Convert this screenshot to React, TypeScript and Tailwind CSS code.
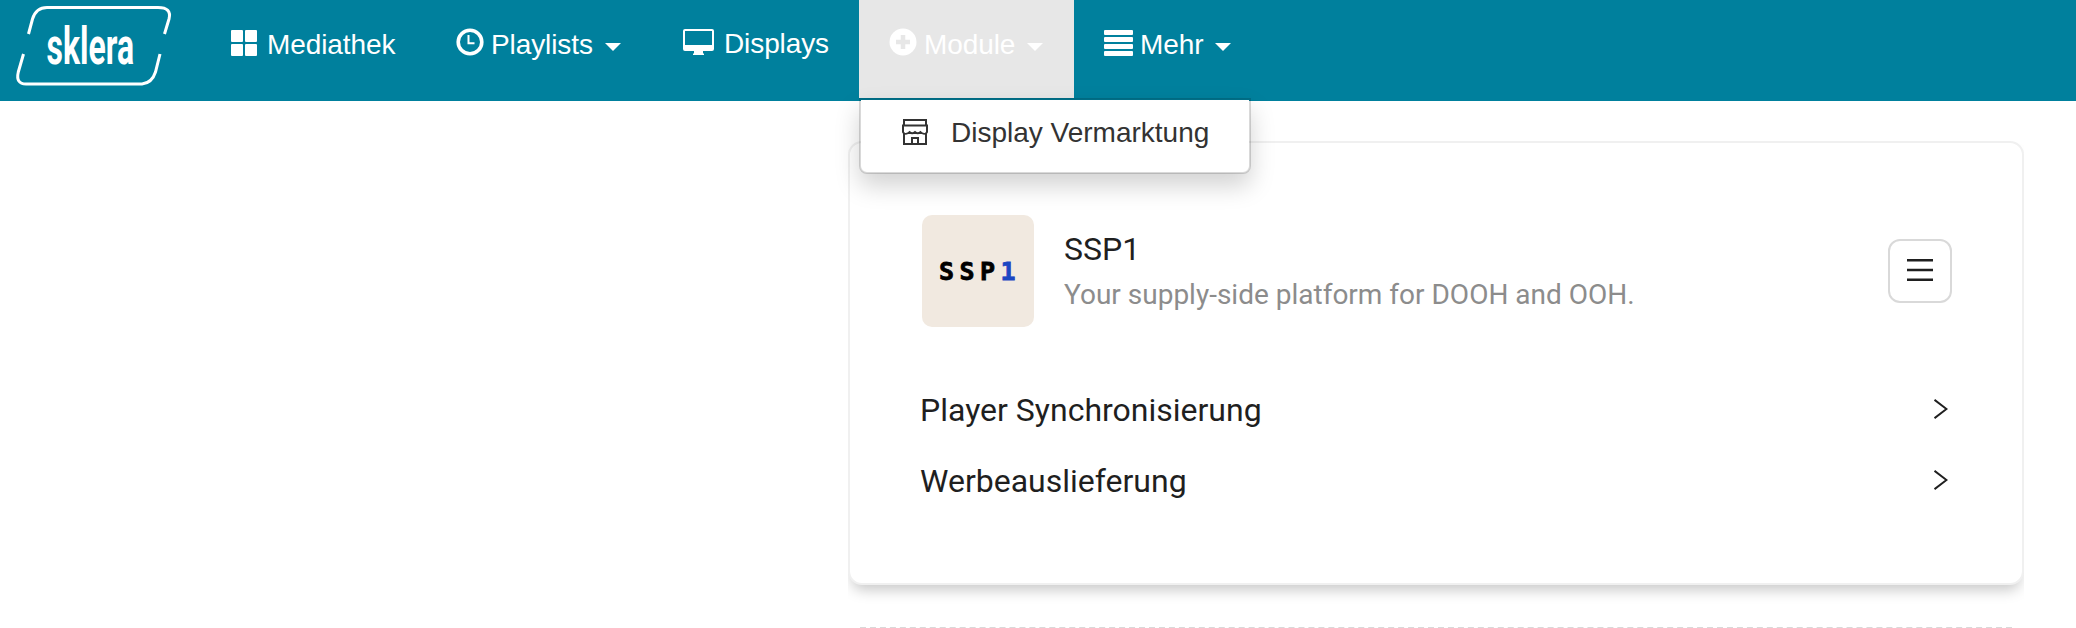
import type { ReactNode } from "react";

const navFont = "font-['Liberation_Sans',Arial,sans-serif] text-[28px] leading-[40px]";

function Caret() {
  return (
    <span className="ml-3 mt-1.5 h-0 w-0 border-x-8 border-t-8 border-x-transparent border-t-current" />
  );
}

function Logo() {
  return (
    <svg width="180" height="100" viewBox="0 0 180 100" role="img" aria-label="sklera">
      <g fill="none" stroke="#fff" strokeWidth="3">
        <path d="M28.5 34 L32.5 19 Q36 7.5 47 7.5 H158 Q172 7.5 169 19 L164.5 34" />
        <path d="M23.5 54 L18.3 72 Q15.5 84 26 84 H142 Q152 83 155.5 72 L160 54" />
      </g>
      <text
        transform="translate(46.5 64) scale(0.627 1)"
        fill="#fff"
        fontFamily="Roboto, sans-serif"
        fontWeight="700"
        fontSize="51"
      >
        sklera
      </text>
    </svg>
  );
}

function TilesIcon() {
  return (
    <svg width="26" height="26" viewBox="0 0 26 26" fill="currentColor" className="-mt-0.5 mr-2.5" aria-hidden="true">
      <rect width="12" height="12" rx="1" />
      <rect x="14" width="12" height="12" rx="1" />
      <rect y="14" width="12" height="12" rx="1" />
      <rect x="14" y="14" width="12" height="12" rx="1" />
    </svg>
  );
}

function ClockIcon() {
  return (
    <svg width="28" height="28" viewBox="0 0 28 28" fill="none" stroke="currentColor" className="-mt-1 mr-[7px]" aria-hidden="true">
      <circle cx="14" cy="14" r="11.8" strokeWidth="3.6" />
      <path d="M12.500 7v8.200h6" strokeWidth="2" />
    </svg>
  );
}

function ScreenIcon() {
  return (
    <svg width="31" height="27" viewBox="0 0 31 27" fill="currentColor" className="-mt-0.5 mr-2.5" aria-hidden="true">
      <path
        fillRule="evenodd"
        d="M2 0h27a2 2 0 0 1 2 2v18a2 2 0 0 1-2 2h-9v2l1 1v1H10v-1l1-1v-2H2a2 2 0 0 1-2-2V2a2 2 0 0 1 2-2zM2 2v14h27V2z"
      />
    </svg>
  );
}

function PlusIcon() {
  return (
    <svg width="28" height="28" viewBox="0 0 28 28" className="-mt-1 mr-[7px]" aria-hidden="true">
      <circle cx="14" cy="14" r="13.5" fill="currentColor" />
      <path d="M14 7v14M7 14h14" stroke="#e7e7e7" strokeWidth="4.5" />
    </svg>
  );
}

function RowsIcon() {
  return (
    <svg width="29" height="26" viewBox="0 0 29 26" fill="currentColor" className="-mt-0.5 mr-[7px]" aria-hidden="true">
      <rect width="29" height="5" rx="1" />
      <rect y="7" width="29" height="5" rx="1" />
      <rect y="14" width="29" height="5" rx="1" />
      <rect y="21" width="29" height="5" rx="1" />
    </svg>
  );
}

function ShopIcon() {
  return (
    <svg width="26" height="26" viewBox="0 0 26 26" fill="none" stroke="#333" strokeWidth="2" aria-hidden="true">
      <path d="M2 6.500V1h22v5.500M1 6.500h24V13l-1 1.500V25H2V14.500L1 13z" />
      <path d="M2 14.500q3.500 1 5.500-1.500q2.700 2.500 5.500 0q2.800 2.500 5.500 0q2 2.500 5.500 1.500" strokeWidth="1.8" />
      <path d="M10 25v-6h6v6" />
    </svg>
  );
}

type NavItemProps = { icon: ReactNode; label: string; className: string; caret?: boolean };

function NavItem({ icon, label, className, caret }: NavItemProps) {
  return (
    <a href="#" className={`flex h-[98px] items-start whitespace-nowrap text-white ${className}`}>
      <span className="flex h-10 items-center">
        {icon}
        <span className="mt-0.5 tracking-[-0.1px]">{label}</span>
        {caret && <Caret />}
      </span>
    </a>
  );
}

function ModuleRow({ label }: { label: string }) {
  return (
    <li className="flex h-[71px] items-center justify-between">
      <span>{label}</span>
      <svg width="14" height="20" viewBox="0 0 14 20" fill="none" stroke="#1f1f1f" strokeWidth="2" className="-mt-0.5 mr-1" aria-hidden="true">
        <path d="M.5 .8 12.500 10 .5 19.200" />
      </svg>
    </li>
  );
}

export default function App() {
  return (
    <div className="h-[628px] w-[2076px] overflow-hidden bg-white">
      <header className={`flex h-[101px] bg-[#00809d] ${navFont}`}>
        <a href="#" className="w-[201px] shrink-0">
          <Logo />
        </a>
        <nav className="flex">
          <NavItem icon={<TilesIcon />} label="Mediathek" className="w-[225px] pl-[30px] pt-6" />
          <NavItem icon={<ClockIcon />} label="Playlists" caret className="w-[227px] pl-[30px] pt-6" />
          <NavItem icon={<ScreenIcon />} label="Displays" className="w-[206px] pl-[30px] pt-[23px]" />
          <div className="relative">
            <NavItem icon={<PlusIcon />} label="Module" caret className="w-[215px] bg-[#e7e7e7] pl-[30px] pt-6" />
            <div className="absolute left-0 top-[98px] z-10 h-[76px] w-[392px] rounded-b-lg border-2 border-black/15 bg-white bg-clip-padding shadow-[0_12px_24px_rgba(0,0,0,0.175)]">
              <a href="#" className="flex h-16 items-center pl-[41px] text-[#333]">
                <ShopIcon />
                <span className="ml-[23px] mt-0.5">Display Vermarktung</span>
              </a>
            </div>
          </div>
          <NavItem icon={<RowsIcon />} label="Mehr" caret className="pl-[30px] pt-6" />
        </nav>
      </header>

      <main className="ml-[848px] mt-10 w-[1176px] font-[Roboto,sans-serif] text-[#1f1f1f]">
        <section className="h-[444px] rounded-[14px] border-2 border-[#f0f0f0] bg-white px-[70px] pt-[72px] shadow-[0_9px_14px_-4px_rgba(0,0,0,0.22)] [clip-path:inset(0_0_-24px_0)]">
          <div className="flex h-28 items-center pl-0.5">
            <div className="flex h-28 w-28 items-center justify-center rounded-[10px] bg-[#f1e9e0]">
              <span className="font-['DejaVu_Sans_Mono',monospace] -mr-1 text-[25px] leading-none font-bold tracking-[5.500px] text-black [-webkit-text-stroke:0.8px]">
                SSP<span className="text-[#1b46c2]">1</span>
              </span>
            </div>
            <div className="ml-[30px] flex-1">
              <h2 className="text-[32px] leading-[48px]">SSP1</h2>
              <p className="text-[28px] leading-[44px] text-[#8c8c8c]">
                Your supply-side platform for DOOH and OOH.
              </p>
            </div>
            <button
              type="button"
              aria-label="Open menu"
              className="flex h-16 w-16 items-center justify-center rounded-xl border-2 border-[#d9d9d9]"
            >
              <svg width="26" height="22" viewBox="0 0 26 22" stroke="#1f1f1f" strokeWidth="2.400" className="-mt-0.5" aria-hidden="true">
                <path d="M0 1.200h26M0 11h26M0 20.800h26" />
              </svg>
            </button>
          </div>
          <ul className="mt-[47px] text-[32px]">
            <ModuleRow label="Player Synchronisierung" />
            <ModuleRow label="Werbeauslieferung" />
          </ul>
        </section>
        <div className="mx-3 mt-[42px] border-t-2 border-dashed border-[#d9d9d9]" />
      </main>
    </div>
  );
}
